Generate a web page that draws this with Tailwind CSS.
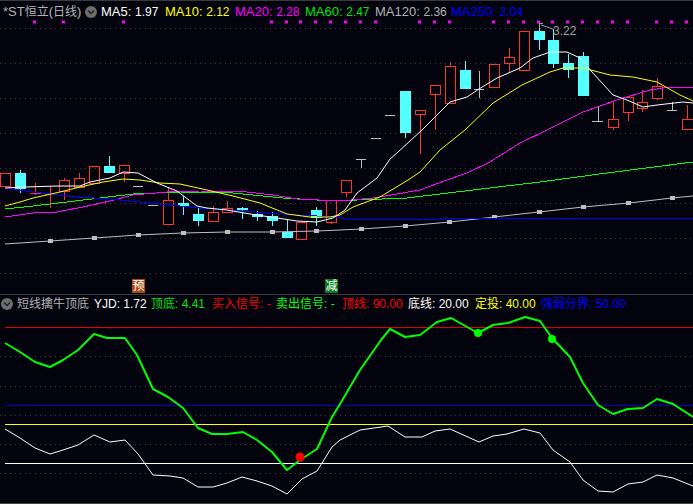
<!DOCTYPE html>
<html lang="en">

<head>
    <meta charset="UTF-8" />
    <title>*ST恒立 (日线)</title>
    <script src="https://cdn.jsdelivr.net/npm/@tailwindcss/browser@4"></script>
</head>

<body class="bg-[#02030d] w-[693px] h-[504px] overflow-hidden font-['Liberation_Sans','Noto_Sans_CJK_SC',sans-serif] text-[13px] leading-none">
    <!-- Main K-line panel -->
    <div class="relative h-[294px] border-t border-[#3a3a3a]">
        <div class="relative z-10 flex items-center h-[21px] pl-[3px] whitespace-nowrap">
            <span class="text-[#b4b4b4] w-[82px]">*ST<span class="text-xs">恒立</span>(<span class="text-xs">日线</span>)</span>
            <span class="flex items-center justify-center w-3 h-3 rounded-full bg-[#6e6e6e] mr-1">
                <svg class="w-2 h-2" viewBox="0 0 8 8" fill="none" stroke="#222" stroke-width="1.5"><path d="M1 2.5 4 5.5 7 2.5" /></svg>
            </span>
            <span class="text-white w-[64px]">MA5: <span class="text-xs">1.97</span></span>
            <span class="text-[#ffff00] w-[70px]">MA10: <span class="text-xs">2.12</span></span>
            <span class="text-[#ff00ff] w-[70px]">MA20: <span class="text-xs">2.28</span></span>
            <span class="text-[#00e600] w-[70px]">MA60: <span class="text-xs">2.47</span></span>
            <span class="text-[#b4b4b4] w-[76px]">MA120: <span class="text-xs">2.36</span></span>
            <span class="text-[#0000ff]">MA250: <span class="text-xs">2.04</span></span>
        </div>

        <svg class="absolute left-0 top-[-1px]" width="693" height="294" viewBox="0 0 693 294">
            <!-- grid -->
            <g stroke="#3c3c3c" stroke-dasharray="1 4">
                <path d="M0 28.5H693M0 63.5H693M0 98.5H693M0 133.5H693M0 168.5H693M0 203.5H693M0 238.5H693M0 273.5H693" />
            </g>
            <!-- magenta ticks -->
            <path stroke="#ff00ff" stroke-width="3" d="M33 22h3M62 22h3M122 22h3M270 22h3M285 22h3M299 22h3M314 22h3M329 22h3M344 22h3M359 22h3M374 22h3M418 22h3M433 22h3M448 22h3M492 22h3M507 22h3M522 22h3M537 22h3M551 22h3M566 22h3M581 22h3M596 22h3M611 22h3M626 22h3M655 22h3M670 22h3M685 22h3" />

            <!-- gray candles -->
            <path fill="none" stroke="#c0c0c0" stroke-width="1" shape-rendering="crispEdges" d="M133 186.500H143M148 205.500H158M356 159.500H366M361.500 159V168M371 138.500H381M385 115.500H395M479.500 71V98M474 89.500H484M592 121.500H603M598.500 107V121M667 110.500H677M672.500 102V110" />

            <!-- cyan candles -->
            <g fill="#54ffff" shape-rendering="crispEdges">
                <rect x="15" y="173" width="11" height="16" /><rect x="20" y="170" width="1" height="23" />
                <rect x="104" y="166" width="11" height="7" /><rect x="109" y="156" width="1" height="17" />
                <rect x="178" y="203" width="11" height="3" /><rect x="183" y="196" width="1" height="19" />
                <rect x="193" y="214" width="11" height="7" /><rect x="198" y="208" width="1" height="18" />
                <rect x="237" y="208" width="11" height="2" /><rect x="242" y="207" width="1" height="12" />
                <rect x="252" y="214" width="11" height="3" /><rect x="257" y="211" width="1" height="10" />
                <rect x="267" y="216" width="11" height="5" /><rect x="272" y="212" width="1" height="14" />
                <rect x="282" y="232" width="11" height="6" /><rect x="287" y="219" width="1" height="13" />
                <rect x="311" y="210" width="11" height="8" /><rect x="316" y="207" width="1" height="19" />
                <rect x="400" y="91" width="11" height="42" /><rect x="405" y="133" width="1" height="5" />
                <rect x="460" y="70" width="11" height="19" /><rect x="465" y="61" width="1" height="9" />
                <rect x="534" y="31" width="11" height="9" /><rect x="539" y="26" width="1" height="24" />
                <rect x="548" y="40" width="11" height="24" /><rect x="553" y="29" width="1" height="39" />
                <rect x="563" y="63" width="11" height="7" /><rect x="568" y="54" width="1" height="24" />
                <rect x="578" y="56" width="11" height="40" /><rect x="583" y="52" width="1" height="4" />
            </g>

            <!-- red candles -->
            <g fill="none" stroke="#ff3232" shape-rendering="crispEdges">
                <rect x="0.500" y="173.500" width="10" height="13" />
                <path d="M35.500 183V195M30 193.500H41M50.500 186V208M45 194.500H56M64.500 178V180M64.500 191V200M79.500 173V178M124.500 173V182M168.500 187V200M213.500 206V212M227.500 201V208M227.500 212V213M301.500 239V240M331.500 222V224M346.500 192V197M420.500 114V154M435.500 94V130M450.500 62V66M509.500 48V57M509.500 63V72M613.500 127V130M613.500 102V119M628.500 112V121M642.500 90V102M642.500 108V112M657.500 78V86M657.500 98V100M687.500 105V119" />
                <rect x="59.500" y="180.500" width="10" height="11" />
                <rect x="74.500" y="178.500" width="10" height="9" />
                <rect x="89.500" y="166.500" width="10" height="17" />
                <rect x="119.500" y="165.500" width="10" height="8" />
                <rect x="163.500" y="200.500" width="10" height="24" />
                <rect x="208.500" y="212.500" width="10" height="9" />
                <rect x="222.500" y="208.500" width="10" height="4" />
                <rect x="296.500" y="222.500" width="10" height="17" />
                <rect x="326.500" y="200.500" width="10" height="22" />
                <rect x="341.500" y="180.500" width="10" height="12" />
                <rect x="415.500" y="110.500" width="10" height="4" />
                <rect x="430.500" y="85.500" width="10" height="9" />
                <rect x="445.500" y="66.500" width="10" height="37" />
                <rect x="489.500" y="64.500" width="10" height="23" />
                <rect x="504.500" y="57.500" width="10" height="6" />
                <rect x="519.500" y="31.500" width="10" height="39" />
                <rect x="608.500" y="119.500" width="10" height="8" />
                <rect x="623.500" y="97.500" width="10" height="15" />
                <rect x="637.500" y="102.500" width="10" height="6" />
                <rect x="652.500" y="86.500" width="10" height="12" />
                <rect x="682.500" y="119.500" width="10.500" height="10" />
            </g>

            <!-- moving averages -->
            <g fill="none" stroke-linejoin="round">
                <polyline stroke="#c0c0c0" stroke-width="1" points="5,244 50,241 94,238 138,235 183,233 227,232 272,232 317,231 340,230 361,229 405,226 450,222 494,217 539,212 583,207 629,203 672,198 693,196" />
                <g fill="#c0c0c0" stroke="none" shape-rendering="crispEdges">
                    <rect x="48" y="239" width="5" height="4" /><rect x="92" y="236" width="5" height="4" /><rect x="136" y="233" width="5" height="4" /><rect x="181" y="231" width="5" height="4" /><rect x="225" y="230" width="5" height="4" /><rect x="270" y="230" width="5" height="4" /><rect x="314" y="229" width="5" height="4" /><rect x="359" y="227" width="5" height="4" /><rect x="403" y="224" width="5" height="4" /><rect x="447" y="220" width="5" height="4" /><rect x="492" y="215" width="5" height="4" /><rect x="537" y="210" width="5" height="4" /><rect x="581" y="205" width="5" height="4" /><rect x="626" y="201" width="5" height="4" /><rect x="670" y="196" width="5" height="4" />
                </g>
                <polyline stroke="#00ff00" stroke-width="1" shape-rendering="crispEdges" points="5,209 33,206 67,202 100,198 133,194 180,192 233,193 283,198 333,201 407,198 473,190 540,182 607,173 693,162" />
                <polyline stroke="#ff00ff" stroke-width="1" shape-rendering="crispEdges" points="5,217 33,213 57,212 83,207 110,201 133,195 167,192 200,191 247,192 273,195 297,199 340,201 373,198 397,194 420,190 447,180 467,173 490,162 520,143 547,130 583,112 617,100 650,90 670,87 693,87" />
                <polyline stroke="#0000ff" stroke-width="1" shape-rendering="crispEdges" points="5,188 33,192 77,197 110,199 150,203 200,208 267,213 333,217 350,219 442,219 443,218 693,218" />
                <polyline stroke="#ffff00" stroke-width="1" points="5,206 20,202 33,198 60,192 80,187 103,182 123,179 140,180 160,183 180,184 207,190 233,196 260,203 287,214 310,217 330,217 340,215 353,207 380,197 408,180 420,172 440,150 465,130 493,103 522,85 550,72 563,68 583,68 610,75 633,77 657,82 680,95 693,101" />
                <polyline stroke="#ffffff" stroke-width="1" points="5,188 24,187 58,186 80,186 90,182 110,178 123,172 138,173 157,183 177,191 197,206 207,208 227,210 250,214 277,218 297,221 317,222 333,218 345,210 357,193 377,178 390,159 398,152 422,130 450,102 467,97 479,89 497,78 520,68 533,58 550,52 567,52 580,58 592,72 613,95 627,100 643,107 657,105 683,102 693,103" />
            </g>

            <!-- high marker -->
            <path fill="none" stroke="#a0a0a0" d="M539.500 23V28M539.500 23.500H543M541 25 553 29" />
            <text x="553" y="35" fill="#a0a0a0" font-size="12">3.22</text>
        </svg>

        <!-- signal badges -->
        <span class="absolute left-[132px] top-[278px] flex items-center justify-center w-[13px] h-[14px] bg-[#a84a10] text-white text-xs">预</span>
        <span class="absolute left-[325px] top-[278px] flex items-center justify-center w-[13px] h-[14px] bg-[#0a7a1a] text-white text-xs">减</span>
    </div>

    <!-- Indicator panel -->
    <div class="relative h-[210px] border-t border-[#3a3a3a]">
        <div class="relative z-10 flex items-center h-[17px] pl-px text-xs whitespace-nowrap">
            <span class="flex items-center justify-center w-3 h-3 rounded-full bg-[#6e6e6e] mr-1">
                <svg class="w-2 h-2" viewBox="0 0 8 8" fill="none" stroke="#222" stroke-width="1.5"><path d="M1 2.5 4 5.5 7 2.5" /></svg>
            </span>
            <span class="text-[#b4b4b4] w-[77px]">短线擒牛顶底</span>
            <span class="text-white w-[57px]">YJD: 1.72</span>
            <span class="text-[#00e600] w-[61px]">顶底: 4.41</span>
            <span class="text-[#ff0000] w-[64px]">买入信号: -</span>
            <span class="text-[#00ff00] w-[66px]">卖出信号: -</span>
            <span class="text-[#ff0000] w-[66px]">顶线: 90.00</span>
            <span class="text-white w-[67px]">底线: 20.00</span>
            <span class="text-[#ffff00] w-[66px]">定投: 40.00</span>
            <span class="text-[#0000ff]">强弱分界: 50.00</span>
        </div>

        <svg class="absolute left-0 top-[-1px]" width="693" height="210" viewBox="0 294 693 210">
            <path stroke="#3c3c3c" stroke-dasharray="1 4" d="M0 356.500H693M0 386.500H693M0 415.500H693M0 444.500H693M0 473.500H693" />
            <g shape-rendering="crispEdges">
                <path stroke="#e00000" d="M5 327.500H693" />
                <path stroke="#0000c8" d="M5 405.500H693" />
                <path stroke="#ffff00" d="M5 424.500H693" />
                <path stroke="#ffffff" d="M5 463.500H693" />
                <path stroke="#444" d="M0 503.500H693" />
            </g>
            <polyline fill="none" stroke="#ffffff" points="5,429 20,438 35,448 50,454 63,450 78,445 94,435 110,442 125,440 138,454 153,475 170,476 183,478 198,487 213,487 227,483 242,477 257,481 272,486 287,494 302,479 317,471 332,447 340,440 350,435 360,430 388,426 405,437 422,437 435,431 450,429 479,442 493,436 507,434 524,429 540,433 553,450 570,462 583,480 598,491 613,492 628,484 643,482 657,475 673,478 693,486" />
            <polyline fill="none" stroke="#00ff00" stroke-width="2" stroke-linejoin="round" points="5,343 20,352 35,362 50,367 63,360 78,350 88,340 94,334 107,338 115,338 125,338 137,355 153,389 168,397 183,408 198,428 212,434 227,434 243,432 257,440 272,452 287,470 300,460 317,449 332,417 340,404 360,370 381,340 390,329 405,337 420,335 437,322 451,318 478,333 493,325 508,323 525,317 540,321 552,338 570,357 583,383 598,405 613,414 628,409 643,408 657,399 673,404 693,417" />
            <circle cx="300" cy="457" r="4.500" fill="#ff0000" />
            <circle cx="478" cy="333" r="4" fill="#00ff00" />
            <circle cx="552" cy="339" r="4" fill="#00ff00" />
        </svg>
    </div>
</body>

</html>
